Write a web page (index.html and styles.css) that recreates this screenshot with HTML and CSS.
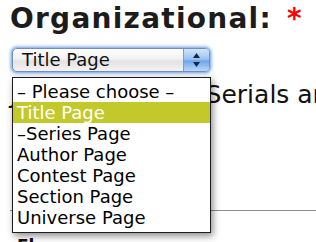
FILE: index.html
```html
<!DOCTYPE html>
<html lang="en">

<head>
    <meta charset="UTF-8">
    <meta name="viewport" content="width=device-width, initial-scale=1.0">
    <title>Organizational</title>
    <link rel="stylesheet" href="styles.css">
</head>

<body>
    <div class="page">
        <h1 class="title">Organizational: <span class="req">*</span></h1>

        <div class="field">
            <div class="select">
                <span class="select-value">Title Page</span>
                <span class="select-btn">
                    <svg width="9" height="16" viewBox="0 0 9 16">
                        <path d="M4.5 1 L8 6 L1 6 Z" fill="#142846" />
                        <path d="M1 10 L8 10 L4.5 15 Z" fill="#142846" />
                    </svg>
                </span>
            </div>

            <!-- open option list of the select -->
            <ul class="options">
                <li>&ndash; Please choose &ndash;</li>
                <li class="selected">Title Page</li>
                <li>&ndash;Series Page</li>
                <li>Author Page</li>
                <li>Contest Page</li>
                <li>Section Page</li>
                <li>Universe Page</li>
            </ul>
        </div>

        <p class="intro">Journals, zines, Serials and more</p>
        <hr class="rule">
        <p class="next">Flags</p>
    </div>
</body>

</html>
```

FILE: styles.css
```css
body {
    font-family: "DejaVu Sans", Verdana, sans-serif;
    background-color: #fff;
    color: #111;
    margin: 0;
    padding: 0;
    overflow: hidden;
}

.page {
    padding: 3px 10px 0 10px;
}

.title {
    font-size: 28px;
    line-height: 32px;
    font-weight: bold;
    letter-spacing: 1.25px;
    color: #1c1c1c;
    margin: 0 0 13px 0;
    white-space: nowrap;
}

.req {
    color: #f00;
    margin-left: 4px;
}

.field {
    position: relative;
    margin-left: 2px;
}

.select {
    display: flex;
    width: 198px;
    height: 24px;
    box-sizing: border-box;
    border: 1px solid #6f8fbf;
    border-radius: 5px;
    background: linear-gradient(#ffffff, #f1f1f1 45%, #e2e2e2 55%, #f4f4f4);
    box-shadow: 0 0 0 1px #9bbdec, 0 0 3px 2px rgba(80, 140, 225, 0.55);
    overflow: hidden;
}

.select-value {
    flex: 1;
    font-size: 18px;
    line-height: 22px;
    padding-left: 9px;
    color: #111;
}

.select-btn {
    width: 25px;
    display: flex;
    align-items: center;
    justify-content: center;
    border-left: 1px solid #7d9ccc;
    background: linear-gradient(#d2e4fa, #9cc4f2 45%, #6fa6ea 55%, #b9d8fb);
}

.options {
    position: absolute;
    left: 0;
    top: 29px;
    width: 199px;
    box-sizing: border-box;
    margin: 0;
    padding: 3px 0 4px 0;
    list-style: none;
    background-color: #fff;
    border: 1px solid #1e1e1e;
    box-shadow: 2px 3px 7px rgba(0, 0, 0, 0.45);
    font-size: 18px;
    line-height: 21px;
    color: #000;
}

.options li {
    padding-left: 4px;
    white-space: nowrap;
}

.options .selected {
    background-color: #c3c92a;
    color: #fff;
}

.intro {
    font-size: 25px;
    line-height: 29px;
    margin: 8px 0 0 0;
    white-space: nowrap;
}

.rule {
    border: 0;
    border-top: 1px solid #8c8c8c;
    margin: 101px -10px 0 0;
}

.next {
    font-size: 17px;
    font-weight: bold;
    margin: 25px 0 0 7px;
}
```
